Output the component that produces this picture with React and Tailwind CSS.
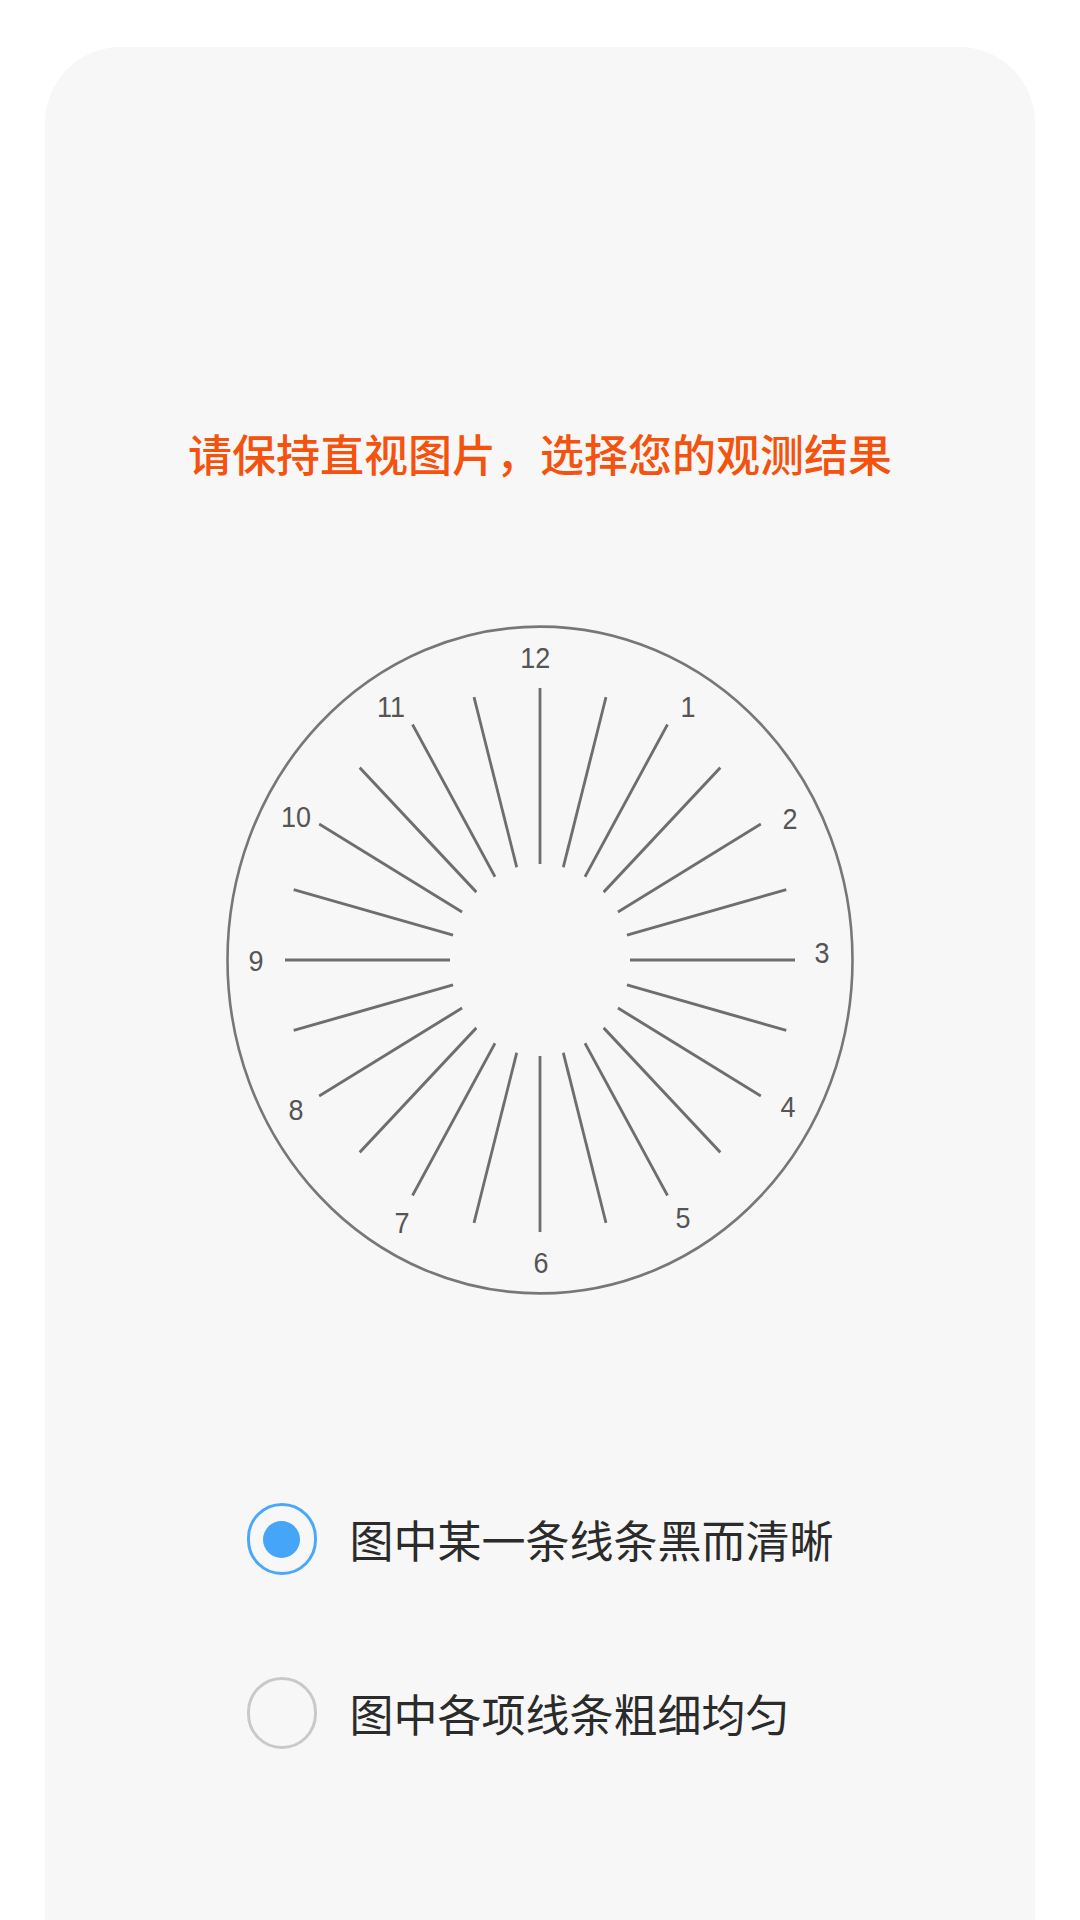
import { useState } from 'react';

const spokes = Array.from({ length: 24 }, (_, i) => (i * 15 * Math.PI) / 180);

// label spots measured off the source chart (they are not on a perfect ring)
const labels = [
  { n: 12, x: -4.7, y: -283 },
  { n: 1, x: 148, y: -237 },
  { n: 2, x: 250, y: -132 },
  { n: 3, x: 282, y: -6 },
  { n: 4, x: 248, y: 138 },
  { n: 5, x: 143, y: 242 },
  { n: 6, x: 1, y: 284 },
  { n: 7, x: -138, y: 247 },
  { n: 8, x: -244, y: 141 },
  { n: 9, x: -284, y: 1.5 },
  { n: 10, x: -244, y: -134 },
  { n: 11, x: -149, y: -237 },
];

function ClockChart() {
  // drawn on a circle, stretched a little vertically like the source picture
  return (
    <svg width="628" height="670" viewBox="-314 -314 628 628" preserveAspectRatio="none" className="block">
      <circle cx="0" cy="0" r="312.5" fill="none" stroke="#777" strokeWidth="2.6" />
      {spokes.map((a, i) => (
        <line
          key={i}
          x1={90 * Math.sin(a)}
          y1={-90 * Math.cos(a)}
          x2={255 * Math.sin(a)}
          y2={-255 * Math.cos(a)}
          stroke="#6e6e6e"
          strokeWidth="2.8"
        />
      ))}
      {labels.map((l) => (
        <text
          key={l.n}
          x={l.x}
          y={l.y}
          textAnchor="middle"
          dominantBaseline="central"
          fontSize="27"
          fill="#555"
          style={{ fontFamily: '"Liberation Sans", Arial, sans-serif' }}
        >
          {l.n}
        </text>
      ))}
    </svg>
  );
}

function Option({ label, checked, onClick }) {
  return (
    <button onClick={onClick} className="flex items-center gap-[33px] text-left">
      <span
        className={`flex h-[72px] w-[70px] items-center justify-center rounded-full border-[3px] ${checked ? 'border-[#4aa8fb]' : 'border-[#c9c9c9]'}`}
      >
        {checked && <span className="h-[37px] w-[37px] rounded-full bg-[#44a5f9]"></span>}
      </span>
      <span className="text-[44px] leading-[1.5] text-[#2b2b2b]">{label}</span>
    </button>
  );
}

export default function App() {
  const [choice, setChoice] = useState(0);
  const options = ['图中某一条线条黑而清晰', '图中各项线条粗细均匀'];

  return (
    <div
      className="min-h-[1920px] bg-white px-[45px] pt-[47px]"
      style={{ fontFamily: '"Noto Sans CJK SC", "Noto Sans", sans-serif' }}
    >
      <div className="flex min-h-[1873px] flex-col items-center rounded-t-[76px] bg-[#f7f7f7] pt-[373px]">
        <h1 className="text-[44px] font-medium leading-[1.5] text-[#f4520d]">请保持直视图片，选择您的观测结果</h1>
        <div className="mt-[139px]">
          <ClockChart />
        </div>
        <div className="mt-[208px] flex flex-col items-start gap-[102px]">
          {options.map((o, i) => (
            <Option key={i} label={o} checked={choice === i} onClick={() => setChoice(i)} />
          ))}
        </div>
      </div>
    </div>
  );
}
